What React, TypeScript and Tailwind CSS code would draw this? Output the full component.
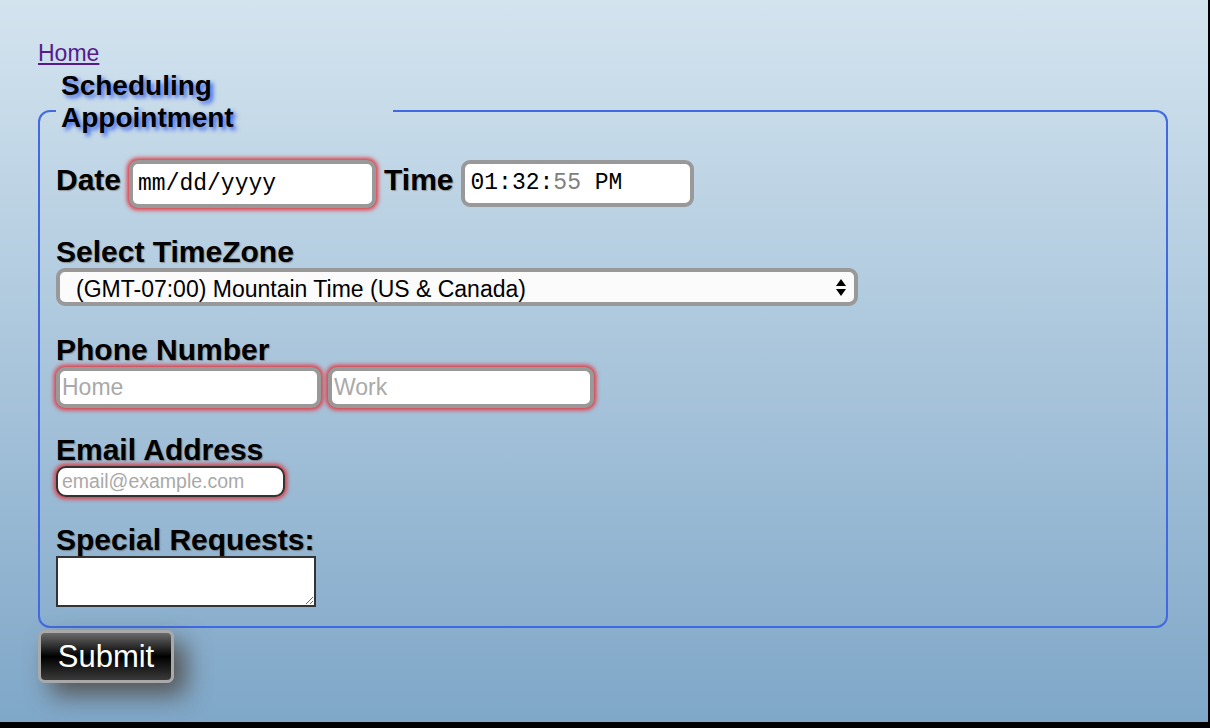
import React from "react";

const labelCls =
  "block text-[30px] leading-[33px] font-bold text-black [text-shadow:1px_1px_1px_rgba(60,30,0,0.35)]";

export default function App() {
  return (
    <div
      className="w-[1210px] h-[728px] bg-black overflow-hidden"
      style={{ fontFamily: '"Liberation Sans", Arial, sans-serif' }}
    >
      <div className="w-[1208px] h-[722px] bg-[linear-gradient(#d4e4ef,#7fa7c8)] pt-[40px] pl-[38px]">
        <a href="#" className="block w-fit text-[23px] leading-[27px] text-[#551a8b] underline">
          Home
        </a>
        <form className="mt-[3px]">
          <fieldset className="w-[1130px] border-2 border-[#4169e1] rounded-[12px] pl-[16px] pr-4 pb-[19px] pt-[8px]">
            <legend className="w-[337px] pl-[5px] pb-[18px] text-[28px] leading-[32px] font-bold text-black [text-shadow:3px_3px_4px_#3d66e6]">
              Scheduling
              <br />
              Appointment
            </legend>

            <div className="flex items-start">
              <span className={labelCls + " mt-[3px]"}>Date</span>
              <div
                className="ml-[8px] w-[247px] h-[48px] border-4 border-[#999] rounded-[9px] bg-white shadow-[0_0_4px_2px_#e4353d] flex items-center pl-[5px] text-[23px] text-black"
                style={{ fontFamily: '"Liberation Mono", "Courier New", monospace' }}
              >
                mm/dd/yyyy
              </div>
              <span className={labelCls + " ml-[8px] mt-[3px]"}>Time</span>
              <div
                className="ml-[7px] w-[233px] h-[47px] border-4 border-[#999] rounded-[9px] bg-white flex items-center pl-[6px] text-[23px] text-black whitespace-pre"
                style={{ fontFamily: '"Liberation Mono", "Courier New", monospace' }}
              >
                01:32:<span className="text-[#808080]">55</span> PM
              </div>
            </div>

            <div className="mt-[27px]">
              <label className={labelCls}>Select TimeZone</label>
              <div className="relative w-[802px] h-[38px]">
                <select
                  className="appearance-none w-full h-full border-4 border-[#999] rounded-[9px] bg-[#fbfbfb] pl-[16px] text-[23px] text-black outline-none"
                  defaultValue="mt"
                >
                  <option value="mt">(GMT-07:00) Mountain Time (US &amp; Canada)</option>
                </select>
                <svg
                  className="absolute right-[12px] top-[11px] pointer-events-none"
                  width="10"
                  height="17"
                  viewBox="0 0 10 17"
                >
                  <path d="M5 0 L10 7 L0 7 Z" fill="#000" />
                  <path d="M0 10 L10 10 L5 17 Z" fill="#000" />
                </svg>
              </div>
            </div>

            <div className="mt-[27px]">
              <label className={labelCls}>Phone Number</label>
              <div className="flex gap-[7px] mt-[1px]">
                <input
                  placeholder="Home"
                  className="w-[265px] h-[41px] border-4 border-[#999] rounded-[9px] bg-white shadow-[0_0_4px_2px_#e4353d] pl-[2px] text-[23px] placeholder:text-[#a9a9a9] outline-none"
                />
                <input
                  placeholder="Work"
                  className="w-[266px] h-[41px] border-4 border-[#999] rounded-[9px] bg-white shadow-[0_0_4px_2px_#e4353d] pl-[2px] text-[23px] placeholder:text-[#a9a9a9] outline-none"
                />
              </div>
            </div>

            <div className="mt-[25px]">
              <label className={labelCls}>Email Address</label>
              <input
                placeholder="email@example.com"
                className="block w-[229px] h-[31px] border-2 border-[#333] rounded-[10px] bg-white shadow-[0_0_4px_2px_#e4353d] pl-[4px] text-[19.5px] placeholder:text-[#a9a9a9] outline-none"
              />
            </div>

            <div className="mt-[26px]">
              <label className={labelCls}>Special Requests:</label>
              <textarea className="block w-[260px] h-[51px] border-2 border-[#333] bg-white outline-none" />
            </div>
          </fieldset>

          <button
            type="button"
            className="mt-[2px] block w-[136px] h-[53px] border-[3px] border-[#a9a9a9] rounded-[7px] bg-[linear-gradient(#6a6a6a,#000_50%,#3a3a3a)] text-white text-[31px] leading-[34px] shadow-[12px_12px_24px_#555]"
          >
            Submit
          </button>
        </form>
      </div>
    </div>
  );
}
